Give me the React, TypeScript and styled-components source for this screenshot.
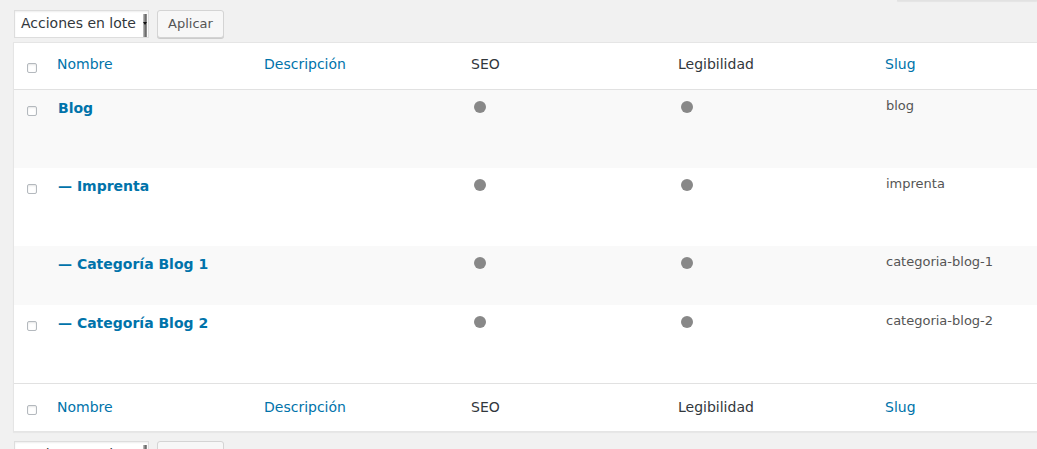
import React from 'react';
import styled, { createGlobalStyle } from 'styled-components';

const GlobalStyle = createGlobalStyle`
  html, body {
    margin: 0;
    padding: 0;
    background: #f1f1f1;
    overflow: hidden;
  }
  body {
    font-family: "DejaVu Sans", Verdana, sans-serif;
    color: #444;
  }
`;

interface Term {
  name: string;
  depth: number;
  slug: string;
  height: number;
  checkbox: boolean;
}

const terms: Term[] = [
  { name: 'Blog', depth: 0, slug: 'blog', height: 78, checkbox: true },
  { name: 'Imprenta', depth: 1, slug: 'imprenta', height: 78, checkbox: true },
  { name: 'Categoría Blog 1', depth: 1, slug: 'categoria-blog-1', height: 59, checkbox: false },
  { name: 'Categoría Blog 2', depth: 1, slug: 'categoria-blog-2', height: 78, checkbox: true },
];

const Page = styled.div`
  width: 1037px;
  height: 449px;
  padding-left: 13px;
  box-sizing: border-box;
  overflow: hidden;
`;

const ScreenMeta = styled.div`
  display: flex;
  justify-content: flex-end;
  height: 1px;
`;

const MetaTab = styled.div`
  width: 140px;
  height: 1px;
  background: #e2e2e2;
  box-shadow: 0 1px 1px rgba(0, 0, 0, 0.06);
`;

const TableNav = styled.div<{ $top: number; $bottom: number }>`
  display: flex;
  gap: 8px;
  padding-left: 1px;
  margin-top: ${(p) => p.$top}px;
  margin-bottom: ${(p) => p.$bottom}px;
  height: 28px;
`;

const BulkSelect = styled.div`
  width: 135px;
  height: 28px;
  box-sizing: border-box;
  border: 1px solid #ddd;
  background: #fff;
  box-shadow: inset 0 1px 2px rgba(0, 0, 0, 0.07);
  display: flex;
  justify-content: space-between;
  padding-left: 6px;
  font-size: 14px;
  color: #32373c;
  line-height: 24px;
  white-space: nowrap;
`;

const SelectHandle = styled.span`
  width: 4px;
  margin-top: 3px;
  margin-right: 1px;
  background: linear-gradient(to right, #c8c8c8, #6a6a6a 60%, #9a9a9a);
  position: relative;

  &::after {
    content: '';
    position: absolute;
    left: 0;
    top: 8px;
    border-left: 2px solid transparent;
    border-right: 2px solid transparent;
    border-top: 3px solid #111;
  }
`;

const ApplyButton = styled.div`
  width: 67px;
  height: 28px;
  box-sizing: border-box;
  border: 1px solid #d4d4d4;
  border-radius: 3px;
  background: #f7f7f7;
  box-shadow: 0 1px 0 #ccc;
  color: #555;
  font-size: 13px;
  line-height: 26px;
  text-align: center;
`;

const Table = styled.div`
  width: 1100px;
  background: #fff;
  border: 1px solid #e5e5e5;
  box-shadow: 0 1px 1px rgba(0, 0, 0, 0.04);
`;

const Row = styled.div<{ $height: number; $alt?: boolean; $line?: 'top' | 'bottom' }>`
  display: grid;
  grid-template-columns: 32px repeat(5, 207px);
  height: ${(p) => p.$height}px;
  background: ${(p) => (p.$alt ? '#f9f9f9' : '#fff')};
  border-top: ${(p) => (p.$line === 'top' ? '1px solid #e1e1e1' : 'none')};
  border-bottom: ${(p) => (p.$line === 'bottom' ? '1px solid #e1e1e1' : 'none')};
`;

const CheckCell = styled.div<{ $top: number }>`
  padding: ${(p) => p.$top}px 0 0 13px;
`;

const Checkbox = styled.span`
  display: block;
  width: 10px;
  height: 10px;
  box-sizing: border-box;
  border: 1px solid #b4b9be;
  border-radius: 2px;
  background: #fff;
  box-shadow: inset 0 1px 2px rgba(0, 0, 0, 0.1);
`;

const HeadCell = styled.div<{ $link?: boolean; $top: number }>`
  padding: ${(p) => p.$top}px 0 0 11px;
  font-size: 14px;
  line-height: 20px;
  color: ${(p) => (p.$link ? '#0073aa' : '#32373c')};
`;

const NameCell = styled.div`
  padding: 8px 0 0 12px;
  font-size: 14px;
  line-height: 20px;
  font-weight: bold;
  color: #0073aa;
`;

const EmptyCell = styled.div``;

const DotCell = styled.div`
  padding: 11px 0 0 14px;
`;

const Dot = styled.span`
  display: block;
  width: 12px;
  height: 12px;
  border-radius: 50%;
  background: #888;
`;

const SlugCell = styled.div`
  padding: 6px 0 0 12px;
  font-size: 13px;
  line-height: 20px;
  color: #555;
`;

const HeaderRow = ({ top, cb, line, height }: { top: number; cb: number; line: 'top' | 'bottom'; height: number }) => (
  <Row $height={height} $line={line}>
    <CheckCell $top={cb}>
      <Checkbox />
    </CheckCell>
    <HeadCell $link $top={top}>Nombre</HeadCell>
    <HeadCell $link $top={top}>Descripción</HeadCell>
    <HeadCell $top={top}>SEO</HeadCell>
    <HeadCell $top={top}>Legibilidad</HeadCell>
    <HeadCell $link $top={top}>Slug</HeadCell>
  </Row>
);

const Actions = ({ top, bottom }: { top: number; bottom: number }) => (
  <TableNav $top={top} $bottom={bottom}>
    <BulkSelect>
      Acciones en lote
      <SelectHandle />
    </BulkSelect>
    <ApplyButton>Aplicar</ApplyButton>
  </TableNav>
);

export default function App() {
  return (
    <>
      <GlobalStyle />
      <Page>
        <ScreenMeta>
          <MetaTab />
        </ScreenMeta>
        <Actions top={9} bottom={4} />
        <Table>
          <HeaderRow height={46} top={11} cb={20} line="bottom" />
          {terms.map((t, i) => (
            <Row key={t.slug} $height={t.height} $alt={i % 2 === 0}>
              <CheckCell $top={16}>{t.checkbox && <Checkbox />}</CheckCell>
              <NameCell>{t.depth > 0 ? '— ' : ''}{t.name}</NameCell>
              <EmptyCell />
              <DotCell>
                <Dot />
              </DotCell>
              <DotCell>
                <Dot />
              </DotCell>
              <SlugCell>{t.slug}</SlugCell>
            </Row>
          ))}
          <HeaderRow height={47} top={13} cb={21} line="top" />
        </Table>
        <Actions top={9} bottom={0} />
      </Page>
    </>
  );
}
